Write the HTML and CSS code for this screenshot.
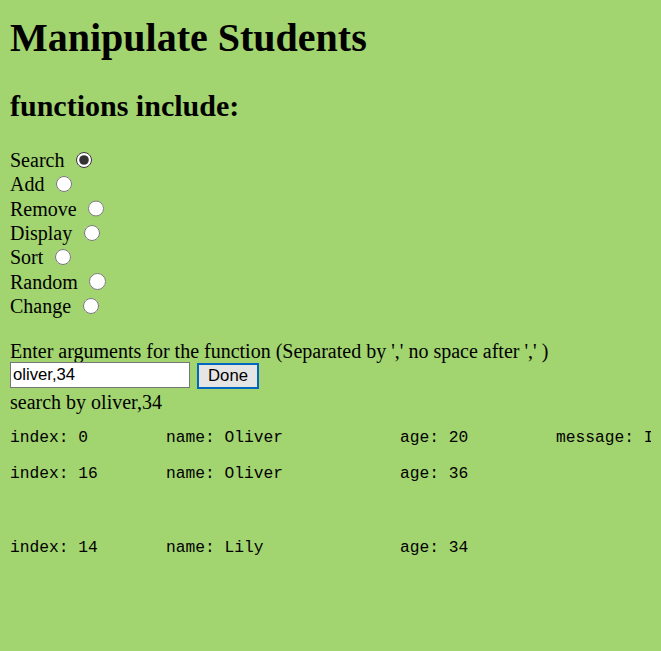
FILE: index.html
```html
<!DOCTYPE html>
<html>
<head>
<meta charset="utf-8">
<title>Manipulate Students</title>
<link rel="stylesheet" href="styles.css">
</head>
<body>
<h1 class="title">Manipulate Students</h1>
<h2 class="subtitle">functions include:</h2>
<div class="funcs">
  <label class="opt">Search <input class="radio" type="radio" name="fn" checked></label>
  <label class="opt">Add <input class="radio" type="radio" name="fn"></label>
  <label class="opt">Remove <input class="radio" type="radio" name="fn"></label>
  <label class="opt">Display <input class="radio" type="radio" name="fn"></label>
  <label class="opt">Sort <input class="radio" type="radio" name="fn"></label>
  <label class="opt">Random <input class="radio" type="radio" name="fn"></label>
  <label class="opt">Change <input class="radio" type="radio" name="fn"></label>
</div>
<div class="args">
  <div class="prompt">Enter arguments for the function (Separated by ',' no space after ',' )</div>
  <div class="entry"><input class="field" type="text" value="oliver,34"> <button class="done" type="button">Done</button></div>
  <div class="echo">search by oliver,34</div>
</div>
<div class="results">
<pre class="row">index: 0	name: Oliver		age: 20		message: I</pre>
<pre class="row">index: 16	name: Oliver		age: 36</pre>
<pre class="row row-gap">index: 14	name: Lily		age: 34</pre>
</div>
</body>
</html>
```
FILE: styles.css
```css
html {
  background: #a2d46f;
}
body {
  margin: 10px;
  font-family: "Liberation Serif", "Times New Roman", serif;
  font-size: 20px;
  color: #000;
  overflow: hidden;
}
.title {
  font-size: 40px;
  font-weight: bold;
  margin: 5px 0 28px;
  line-height: 46px;
}
.subtitle {
  font-size: 30px;
  font-weight: bold;
  margin: 0 0 25px;
  line-height: 34px;
}
.funcs {
  display: flex;
  flex-direction: column;
}
.opt {
  display: block;
  height: 24.33px;
  line-height: 24px;
}
.radio {
  width: 16.25px;
  height: 16.25px;
  margin: 0 0 0 6.5px;
  vertical-align: -1px;
  accent-color: #333;
}
.args {
  margin-top: 22px;
}
.prompt {
  line-height: 22px;
}
.entry {
  display: flex;
  align-items: flex-start;
  gap: 7px;
  height: 28.5px;
  margin-top: -0.5px;
}
.field {
  box-sizing: border-box;
  width: 180px;
  height: 26px;
  margin: 0;
  padding: 1px 2px;
  border: 1px solid #767676;
  background: #fff;
  font-family: "Liberation Sans", Arial, sans-serif;
  font-size: 16.7px;
  color: #000;
}
.done {
  box-sizing: border-box;
  width: 62px;
  height: 26px;
  margin: 1px 0 0;
  padding: 0;
  border: 2px solid #0067c0;
  background: #e5e5e5;
  font-family: "Liberation Sans", Arial, sans-serif;
  font-size: 16.7px;
  color: #000;
}
.echo {
  line-height: 24px;
}
.results {
  margin-top: 14px;
}
.row {
  margin: 0 0 17px;
  font-family: "Liberation Mono", "Courier New", monospace;
  font-size: 16.25px;
  line-height: 19px;
  tab-size: 8;
  white-space: pre;
}
.row-gap {
  margin-top: 55px;
}
```
